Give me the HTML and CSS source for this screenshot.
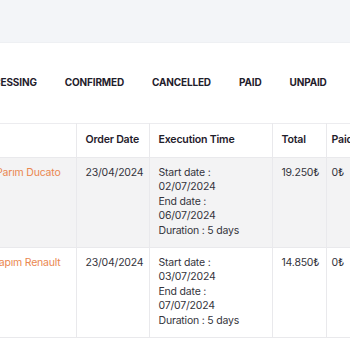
FILE: index.html
```html
<!DOCTYPE html>
<html lang="tr">
<head>
  <meta charset="UTF-8" />
  <meta name="viewport" content="width=device-width, initial-scale=1.0"/>
  <title>Siparişler</title>
  <link rel="stylesheet" href="styles.css">
</head>
<body>
  <div class="topbar"></div>
  <div class="sayfa">
    <nav class="sekmeler">
      <span class="sekme">PROCESSING</span>
      <span class="sekme">CONFIRMED</span>
      <span class="sekme">CANCELLED</span>
      <span class="sekme">PAID</span>
      <span class="sekme">UNPAID</span>
      <span class="sekme soluk">REFUNDED</span>
    </nav>

    <table class="tablo">
      <colgroup>
        <col class="c-urun">
        <col class="c-tarih">
        <col class="c-sure">
        <col class="c-toplam">
        <col class="c-odenen">
      </colgroup>
      <thead>
        <tr>
          <th class="urun">Product</th>
          <th>Order Date</th>
          <th>Execution Time</th>
          <th>Total</th>
          <th class="odenen">Paid</th>
        </tr>
      </thead>
      <tbody>
        <tr class="gri">
          <td class="urun"><a href="#">Karavan Parım Ducato</a></td>
          <td>23/04/2024</td>
          <td>
            <div>Start date :</div>
            <div>02/07/2024</div>
            <div>End date :</div>
            <div>06/07/2024</div>
            <div>Duration : 5 days</div>
          </td>
          <td>19.250₺</td>
          <td class="odenen">0₺</td>
        </tr>
        <tr>
          <td class="urun"><a href="#">Karavan Yapım Renault</a></td>
          <td>23/04/2024</td>
          <td>
            <div>Start date :</div>
            <div>03/07/2024</div>
            <div>End date :</div>
            <div>07/07/2024</div>
            <div>Duration : 5 days</div>
          </td>
          <td>14.850₺</td>
          <td class="odenen">0₺</td>
        </tr>
      </tbody>
    </table>
  </div>
</body>
</html>
```

FILE: styles.css
```css
body {
  margin: 0;
  font-family: Inter, "Noto Sans", sans-serif;
  color: #34343c;
  background: #fff;
  overflow: hidden;
}
.topbar {
  height: 42px;
  background-color: #f3f5f8;
  border-bottom: 1px solid #eef0f3;
}
.sayfa {
  width: 700px;
  margin-left: -200px;
}
.sekmeler {
  display: flex;
  gap: 28px;
  padding: 32px 0 0 173px;
  height: 48px;
  box-sizing: border-box;
}
.sekme {
  font-size: 10px;
  letter-spacing: -0.15px;
  font-weight: 700;
  color: #1f202b;
  line-height: 14px;
}
.sekme.soluk {
  color: #e4e6ea;
}
.tablo {
  width: 606px;
  border-collapse: collapse;
  table-layout: fixed;
  margin-top: 32px;
  font-size: 10.5px;
  letter-spacing: -0.2px;
}
.c-urun { width: 276px; }
.c-tarih { width: 73px; }
.c-sure { width: 123px; }
.c-toplam { width: 54px; }
.c-odenen { width: 80px; }
.tablo th,
.tablo td {
  border: 1px solid #e9e9ec;
  border-top: none;
  text-align: left;
  vertical-align: top;
  padding: 8px 9px;
  line-height: 14.6px;
}
.tablo thead tr {
  border-top: 1px solid #ececef;
}
.tablo th {
  font-size: 10.6px;
  font-weight: 600;
  color: #1f202b;
  padding: 9px 9px;
}
.tablo th.urun {
  border-left: none;
}
.tablo td.urun {
  text-align: right;
  padding-right: 15px;
  border-left: none;
}
.tablo th.odenen,
.tablo td.odenen {
  padding-left: 5px;
}
.tablo tr.gri td {
  background-color: #f3f3f4;
}
.tablo a {
  color: #ea8750;
  text-decoration: none;
}
```
